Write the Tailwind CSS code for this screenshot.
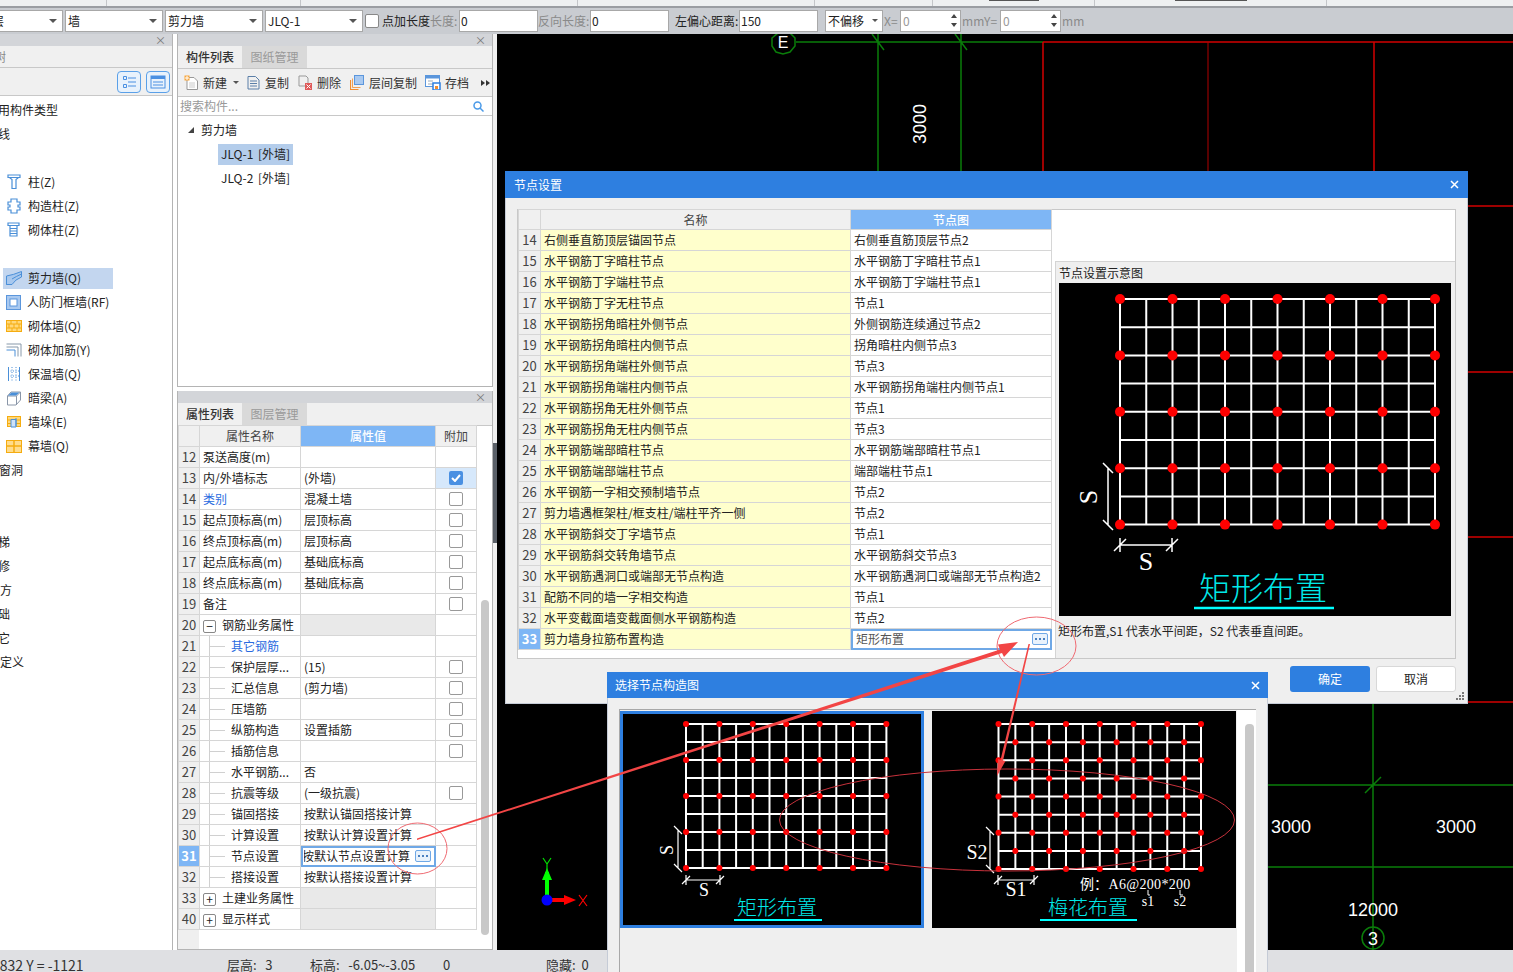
<!DOCTYPE html>
<html lang="zh-CN">
<head>
    <meta charset="UTF-8">
    <title>节点设置</title>
    <script src="https://cdn.jsdelivr.net/npm/@tailwindcss/browser@4"></script>
</head>
<body class="w-[1513px] h-[972px] overflow-hidden relative bg-white text-[12px] leading-[16px] text-[#222] font-['Noto_Sans_CJK_SC','Noto_Sans',sans-serif]">

    <!-- top strip, cut off by the screen grab -->
    <div class="h-[8px] bg-[#eef0f1] border-b-2 border-[#9a9da2] flex overflow-hidden">
        <div class="w-[107px] border-r border-[#c4c6c9]"></div>
        <div class="w-[194px] border-r border-[#c4c6c9]"></div>
        <div class="w-[277px] border-r border-[#c4c6c9]"></div>
        <div class="w-[237px] border-r border-[#c4c6c9]"></div>
        <div class="w-[118px] border-r border-[#c4c6c9]"></div>
        <div class="w-[162px] border-r border-[#c4c6c9] flex justify-center"><span class="w-[50px] h-[1px] bg-[#555]"></span></div>
        <div class="w-[232px] border-r border-[#c4c6c9] flex justify-center"><span class="w-[72px] h-[1px] bg-[#555]"></span></div>
    </div>

    <!-- drawing toolbar -->
    <div class="h-[26px] pb-[1px] bg-[#c9ccd1] flex items-center text-[#222] [&_input]:h-[22px] [&_input]:border [&_input]:border-[#a8a8a8] [&_input]:bg-white [&_input]:px-[1px] [&_input]:outline-none">
        <div class="w-[63px] h-[22px] bg-white border border-[#a8a8a8] border-l-0 flex items-center justify-between pr-[5px] overflow-hidden"><span class="-ml-[20px] whitespace-nowrap">楼层</span><span class="w-0 h-0 border-x-[4px] border-x-transparent border-t-[4px] border-t-[#555]"></span></div>
        <div class="ml-[2px] w-[98px] h-[22px] bg-white border border-[#a8a8a8] flex items-center justify-between pl-[2px] pr-[5px]"><span>墙</span><span class="w-0 h-0 border-x-[4px] border-x-transparent border-t-[4px] border-t-[#555]"></span></div>
        <div class="ml-[2px] w-[98px] h-[22px] bg-white border border-[#a8a8a8] flex items-center justify-between pl-[2px] pr-[5px]"><span>剪力墙</span><span class="w-0 h-0 border-x-[4px] border-x-transparent border-t-[4px] border-t-[#555]"></span></div>
        <div class="ml-[2px] w-[98px] h-[22px] bg-white border border-[#a8a8a8] flex items-center justify-between pl-[2px] pr-[5px]"><span>JLQ-1</span><span class="w-0 h-0 border-x-[4px] border-x-transparent border-t-[4px] border-t-[#555]"></span></div>
        <span class="ml-[2px] w-[14px] h-[14px] bg-white border border-[#888] rounded-[2px]"></span>
        <span class="ml-[3px]">点加长度</span>
        <span class="text-[#8a8a8a] w-[29px]">长度:</span>
        <input class="w-[79px]" value="0">
        <span class="text-[#8a8a8a] w-[52px]">反向长度:</span>
        <input class="w-[79px]" value="0">
        <span class="ml-[6px] w-[64px]">左偏心距离:</span>
        <input class="w-[79px]" value="150">
        <div class="ml-[7px] w-[58px] h-[22px] bg-white border border-[#a8a8a8] flex items-center justify-between px-[2px] pr-[4px]"><span>不偏移</span><span class="w-0 h-0 border-x-[3px] border-x-transparent border-t-[3px] border-t-[#555]"></span></div>
        <span class="ml-[1px] w-[16px] text-[#8a8a8a]">X=</span>
        <div class="w-[61px] h-[22px] bg-white border border-[#a8a8a8] flex items-center justify-between pl-[2px] pr-[3px] text-[#999]"><span>0</span><span class="flex flex-col gap-[5px]"><span class="w-0 h-0 border-x-[3px] border-x-transparent border-b-[4px] border-b-[#444]"></span><span class="w-0 h-0 border-x-[3px] border-x-transparent border-t-[4px] border-t-[#444]"></span></span></div>
        <span class="ml-[1px] w-[38px] text-[#8a8a8a]">mmY=</span>
        <div class="w-[61px] h-[22px] bg-white border border-[#a8a8a8] flex items-center justify-between pl-[2px] pr-[3px] text-[#999]"><span>0</span><span class="flex flex-col gap-[5px]"><span class="w-0 h-0 border-x-[3px] border-x-transparent border-b-[4px] border-b-[#444]"></span><span class="w-0 h-0 border-x-[3px] border-x-transparent border-t-[4px] border-t-[#444]"></span></span></div>
        <span class="ml-[1px] text-[#8a8a8a]">mm</span>
    </div>

    <div class="flex h-[916px]">
        <!-- left: component tree -->
        <div class="w-[173px] border-r border-[#b4b4b4] flex flex-col overflow-hidden">
            <div class="h-[12px] bg-[#d3d5d9] flex justify-end items-center pr-[6px] text-[#777] text-[11px] leading-none shrink-0">×</div>
            <div class="h-[22px] bg-[#f0f0f0] border-b border-[#c8c8c8] flex items-center text-[#888] shrink-0"><span class="-ml-[6px]">树</span></div>
            <div class="h-[28px] bg-[#f0f0f0] border-b border-[#c8c8c8] flex items-center justify-end gap-[5px] pr-[2px] shrink-0">
                <span class="w-[24px] h-[22px] rounded-[4px] border border-[#5aa0e8] bg-[#e8f2fc] flex items-center justify-center">
                    <svg width="14" height="14" viewBox="0 0 14 14" fill="none" stroke="#4a90e2"><path d="M1.5 1.5h3v3h-3zM1.5 9.5h3v3h-3zM6 3h8M6 7h8M6 11h8"/></svg>
                </span>
                <span class="w-[24px] h-[22px] rounded-[4px] border border-[#5aa0e8] bg-[#e8f2fc] flex items-center justify-center">
                    <svg width="16" height="14" viewBox="0 0 16 14" fill="none"><rect x="1" y="1" width="14" height="12" stroke="#4a90e2"/><rect x="1" y="1" width="14" height="3" fill="#4a90e2"/><path d="M3 7h10M3 10h10" stroke="#4a90e2"/></svg>
                </span>
            </div>
            <div class="pt-[2px] flex flex-col [&>div]:h-[24px] [&>div]:flex [&>div]:items-center [&>div]:whitespace-nowrap">
                <div><span class="-ml-[2px]">用构件类型</span></div>
                <div><span class="-ml-[2px]">线</span></div>
                <div></div>
                <div class="pl-[7px] gap-[7px]">
                    <svg width="14" height="16" viewBox="0 0 14 16" fill="none" stroke="#4a8fd8" stroke-width="1.2"><path d="M1 1h12v2.5H1zM2.5 3.5l2.5 2v9h4v-9l2.500-2"/></svg><span>柱(Z)</span>
                </div>
                <div class="pl-[7px] gap-[7px]">
                    <svg width="14" height="16" viewBox="0 0 14 16" fill="none" stroke="#4a8fd8" stroke-width="1.2"><path d="M4 1h6v3h3v3h-2v2h2v3h-3v3H4v-3H1V9h2V7H1V4h3z"/></svg><span>构造柱(Z)</span>
                </div>
                <div class="pl-[7px] gap-[7px]">
                    <svg width="14" height="16" viewBox="0 0 14 16" fill="none" stroke="#4a8fd8" stroke-width="1.2"><path d="M1 1h11v2.5H1zM3 3.5v10.500h7V3.500M3 6.500h7M3 9h7M3 11.500h7"/></svg><span>砌体柱(Z)</span>
                </div>
                <div></div>
                <div class="pl-[3px]">
                    <div class="w-[110px] h-[21px] bg-[#c3d6ef] flex items-center pl-[3px] gap-[3px]">
                        <svg width="16" height="14" viewBox="0 0 16 14"><path d="M0.500 5Q7 4 15.500 0.500V6Q9 8.500 6 13.500H0.500z" fill="#a8c8ee" stroke="#4a8fd8"/><path d="M0.500 5V13.500M6 8Q10 5.500 15.500 3" fill="none" stroke="#4a8fd8"/></svg><span class="ml-[3px]">剪力墙(Q)</span>
                    </div>
                </div>
                <div class="pl-[6px] gap-[6px]">
                    <svg width="15" height="15" viewBox="0 0 15 15"><rect x="0.500" y="0.500" width="14" height="14" fill="#a9c9f0" stroke="#5b96dc"/><rect x="4" y="4" width="7" height="7" fill="#fff" stroke="#5b96dc"/></svg><span>人防门框墙(RF)</span>
                </div>
                <div class="pl-[6px] gap-[6px]">
                    <svg width="16" height="12" viewBox="0 0 16 12"><rect x="0.500" y="0.500" width="15" height="11" fill="#ffd87a" stroke="#f5ac10"/><path d="M0 4h16M0 8h16M5 0v4M11 0v4M3 4v4M8 4v4M13 4v4M6 8v4M11 8v4" stroke="#f5ac10"/></svg><span>砌体墙(Q)</span>
                </div>
                <div class="pl-[6px] gap-[6px]">
                    <svg width="16" height="14" viewBox="0 0 16 14" fill="none"><path d="M0.500 1H15V13.500M0.500 4H12V13.500" stroke="#8899aa"/><path d="M0.500 7H9V13.500" stroke="#4a8fd8"/></svg><span>砌体加筋(Y)</span>
                </div>
                <div class="pl-[8px] gap-[8px]">
                    <svg width="12" height="14" viewBox="0 0 12 14" fill="none"><path d="M0.500 0V14M11.500 0V14" stroke="#4a8fd8"/><path d="M4 0V14M8 0V14M0 4h12M0 9h12" stroke="#4a8fd8" stroke-dasharray="1 1.500"/></svg><span>保温墙(Q)</span>
                </div>
                <div class="pl-[7px] gap-[7px]">
                    <svg width="14" height="15" viewBox="0 0 14 15"><path d="M0.500 5L4 1H13.500V9L9 14H0.500z" fill="#fff" stroke="#8a96a8"/><path d="M0.500 5H9.500L13.500 1M9.500 5V14" fill="none" stroke="#8a96a8"/><path d="M1 4.500L4.500 1.500H12.500L9 4.500z" fill="#4a8fd8"/></svg><span>暗梁(A)</span>
                </div>
                <div class="pl-[7px] gap-[7px]">
                    <svg width="14" height="12" viewBox="0 0 14 12"><rect x="0.500" y="0.500" width="13" height="10" fill="#ffd87a" stroke="#f5ac10"/><path d="M0 4h14M0 7.500h14" stroke="#f5ac10"/><path d="M4 3.500h5v7.500H4z" fill="#cfe2f8" stroke="#4a8fd8"/><path d="M9 2v8" stroke="#4a8fd8"/></svg><span>墙垛(E)</span>
                </div>
                <div class="pl-[6px] gap-[6px]">
                    <svg width="16" height="13" viewBox="0 0 16 13"><rect x="0.500" y="0.500" width="15" height="12" fill="#ffdc8c" stroke="#f5ac10"/><path d="M0 6h16M8 0v13" stroke="#f5ac10" stroke-width="1.500"/></svg><span>幕墙(Q)</span>
                </div>
                <div><span class="-ml-[1px]">窗洞</span></div>
                <div></div>
                <div></div>
                <div><span class="-ml-[2px]">梯</span></div>
                <div><span class="-ml-[2px]">修</span></div>
                <div><span>方</span></div>
                <div><span class="-ml-[2px]">础</span></div>
                <div><span class="-ml-[2px]">它</span></div>
                <div><span>定义</span></div>
            </div>
        </div>

        <div class="w-[4px]"></div>

        <!-- middle: component list and properties -->
        <div class="w-[316px] flex flex-col">
            <div class="h-[353px] border-x border-b border-[#b4b4b4] flex flex-col">
                <div class="h-[12px] bg-[#d3d5d9] flex justify-end items-center pr-[6px] text-[#777] text-[11px] leading-none">×</div>
                <div class="h-[23px] bg-[#f0f0f0] border-b border-[#c8c8c8] flex items-stretch">
                    <div class="w-[64px] flex items-center justify-center font-medium text-[#333]">构件列表</div>
                    <div class="w-[65px] bg-[#d9d9d9] flex items-center justify-center text-[#999]">图纸管理</div>
                </div>
                <div class="h-[28px] bg-[#f0f0f0] border-b border-[#c8c8c8] flex items-center pl-[6px] text-[#333] whitespace-nowrap">
                    <svg width="15" height="16" viewBox="0 0 15 16" fill="none"><path d="M3 2.500h7l3.500 3.500v8.500H3z" fill="#fff" stroke="#999"/><path d="M5 8h6M5 10h6M5 12h6" stroke="#ccc"/><rect x="0.500" y="0.500" width="5" height="5" fill="#f7a63c"/><path d="M1 3h4M3 1v4" stroke="#fff"/></svg>
                    <span class="ml-[4px]">新建</span><span class="ml-[6px] w-0 h-0 border-x-[3px] border-x-transparent border-t-[3px] border-t-[#555]"></span>
                    <svg class="ml-[8px]" width="13" height="15" viewBox="0 0 13 15" fill="none" stroke="#5b7fa8"><path d="M1 1.500h7.500L12 5v9H1zM3 6h7M3 8.500h7M3 11h7"/></svg>
                    <span class="ml-[5px]">复制</span>
                    <svg class="ml-[9px]" width="14" height="15" viewBox="0 0 14 15" fill="none"><path d="M1 1h7l2 2v8H1z" stroke="#999"/><rect x="7" y="8" width="7" height="7" fill="#e05a5a"/><path d="M8.500 9.500l4 4m0-4l-4 4" stroke="#fff"/></svg>
                    <span class="ml-[5px]">删除</span>
                    <svg class="ml-[9px]" width="14" height="15" viewBox="0 0 14 15" fill="none"><path d="M0.500 5v9.500h8" stroke="#f08c30" stroke-width="1.200"/><path d="M2.500 3.500v9h8" stroke="#f08c30" stroke-width="0.800"/><rect x="4.500" y="0.500" width="9" height="9" fill="#a9c9f0" stroke="#5b96dc"/></svg>
                    <span class="ml-[5px]">层间复制</span>
                    <svg class="ml-[8px]" width="16" height="15" viewBox="0 0 16 15" fill="none"><rect x="0.500" y="0.500" width="14" height="11" fill="#fff" stroke="#5b96dc"/><rect x="0.500" y="0.500" width="14" height="3" fill="#5b96dc"/><path d="M3 6h5M3 9h5" stroke="#9ab"/><rect x="8" y="8" width="7" height="7" fill="#fff" stroke="#2e7fe0" stroke-width="1.500"/><rect x="10" y="11" width="3" height="3" fill="#f08c30"/></svg>
                    <span class="ml-[4px]">存档</span>
                    <span class="ml-[12px] flex"><span class="w-0 h-0 border-y-[3px] border-y-transparent border-l-[4px] border-l-[#333]"></span><span class="ml-[1px] w-0 h-0 border-y-[3px] border-y-transparent border-l-[4px] border-l-[#333]"></span></span>
                </div>
                <div class="h-[19px] border-b border-[#c8c8c8] flex items-center justify-between pl-[2px] pr-[8px] text-[#999]">
                    <span>搜索构件...</span>
                    <svg width="11" height="11" viewBox="0 0 11 11" fill="none" stroke="#4a9ae8" stroke-width="1.500"><circle cx="4.500" cy="4.500" r="3.500"/><path d="M7 7l3.500 3.500"/></svg>
                </div>
                <div class="pt-[2px] flex flex-col whitespace-nowrap [word-spacing:2px]">
                    <div class="h-[24px] flex items-center pl-[10px]"><span class="w-0 h-0 border-b-[6px] border-b-[#444] border-l-[6px] border-l-transparent"></span><span class="ml-[7px]">剪力墙</span></div>
                    <div class="h-[24px] flex items-center pl-[40px]"><span class="h-[21px] px-[3px] bg-[#b4cdeb] flex items-center">JLQ-1 [外墙]</span></div>
                    <div class="h-[24px] flex items-center pl-[43px]">JLQ-2 [外墙]</div>
                </div>
            </div>
            <div class="h-[4px]"></div>
            <div class="h-[559px] border-x border-[#b4b4b4] border-b flex flex-col relative">
                <div class="h-[12px] bg-[#d3d5d9] flex justify-end items-center pr-[6px] text-[#777] text-[11px] leading-none">×</div>
                <div class="h-[23px] bg-[#f0f0f0] border-b border-[#c8c8c8] flex items-stretch">
                    <div class="w-[64px] flex items-center justify-center font-medium text-[#333]">属性列表</div>
                    <div class="w-[65px] bg-[#d9d9d9] flex items-center justify-center text-[#999]">图层管理</div>
                </div>
                <!-- scrollbar -->
                <div class="absolute left-[303px] top-[209px] w-[8px] h-[335px] rounded-[4px] bg-[#c8c8c8]"></div>
                <div class="flex flex-1 bg-[linear-gradient(90deg,#efefef_21px,#fff_21px)]">
                    <table class="w-[298px] -mt-px table-fixed border-collapse self-start [&_td]:h-[21px] [&_td]:p-0 [&_td]:border [&_td]:border-[#d6d6d6] [&_td]:whitespace-nowrap [&_td]:overflow-hidden [&_td:first-child]:bg-[#efefef] [&_td:first-child]:text-center [&_td:first-child]:text-[13px] [&_td:first-child]:text-[#444] [&_td:nth-child(2)]:bg-white [&_td:nth-child(3)]:bg-white [&_td:nth-child(4)]:bg-white [&_td:nth-child(2)]:pl-[3px] [&_td:nth-child(3)]:pl-[3px] [&_td:has(i)]:leading-[20px] [&_input]:appearance-none [&_input]:block [&_input]:mx-auto [&_input]:w-[14px] [&_input]:h-[14px] [&_input]:bg-white [&_input]:border [&_input]:border-[#999] [&_input]:rounded-[2px] [&_i]:float-left [&_i]:w-[16px] [&_i]:h-[20px] [&_i]:mr-[6px] [&_i]:ml-[6px] [&_i]:border-l [&_i]:border-[#d0d0d0] [&_i]:bg-[linear-gradient(#d0d0d0,#d0d0d0)] [&_i]:bg-no-repeat [&_i]:bg-[length:100%_1px] [&_i]:bg-[position:0_10px]">
                        <colgroup><col class="w-[21px]"><col class="w-[101px]"><col class="w-[135px]"><col class="w-[41px]"></colgroup>
                        <tr class="[&_td]:!bg-[#f0f0f0] [&_td]:text-center [&_td]:text-[#444] [&_td]:!pl-0 [&_td:nth-child(3)]:!bg-[#7eb6f5]"><td></td><td>属性名称</td><td class="!text-white font-medium">属性值</td><td>附加</td></tr>
                        <tr><td>12</td><td>泵送高度(m)</td><td></td><td></td></tr>
                        <tr><td>13</td><td>内/外墙标志</td><td>(外墙)</td><td class="!bg-[#d6e8fb]"><span class="mx-auto w-[14px] h-[14px] rounded-[2px] bg-[#4a90e2] flex items-center justify-center"><svg width="10" height="8" viewBox="0 0 10 8" fill="none" stroke="#fff" stroke-width="2"><path d="M1 4l3 3 5-6"/></svg></span></td></tr>
                        <tr><td>14</td><td class="text-[#2a6be0]">类别</td><td>混凝土墙</td><td><input type="checkbox"></td></tr>
                        <tr><td>15</td><td>起点顶标高(m)</td><td>层顶标高</td><td><input type="checkbox"></td></tr>
                        <tr><td>16</td><td>终点顶标高(m)</td><td>层顶标高</td><td><input type="checkbox"></td></tr>
                        <tr><td>17</td><td>起点底标高(m)</td><td>基础底标高</td><td><input type="checkbox"></td></tr>
                        <tr><td>18</td><td>终点底标高(m)</td><td>基础底标高</td><td><input type="checkbox"></td></tr>
                        <tr><td>19</td><td>备注</td><td></td><td><input type="checkbox"></td></tr>
                        <tr><td>20</td><td><span class="inline-flex w-[13px] h-[13px] border border-[#888] rounded-[2px] items-center justify-center align-middle mr-[6px] -mt-[1px] leading-none">−</span>钢筋业务属性</td><td class="!bg-[#e9e9e9]"></td><td></td></tr>
                        <tr><td>21</td><td class="text-[#2a6be0]"><i></i>其它钢筋</td><td></td><td></td></tr>
                        <tr><td>22</td><td><i></i>保护层厚...</td><td>(15)</td><td><input type="checkbox"></td></tr>
                        <tr><td>23</td><td><i></i>汇总信息</td><td>(剪力墙)</td><td><input type="checkbox"></td></tr>
                        <tr><td>24</td><td><i></i>压墙筋</td><td></td><td><input type="checkbox"></td></tr>
                        <tr><td>25</td><td><i></i>纵筋构造</td><td>设置插筋</td><td><input type="checkbox"></td></tr>
                        <tr><td>26</td><td><i></i>插筋信息</td><td></td><td><input type="checkbox"></td></tr>
                        <tr><td>27</td><td><i></i>水平钢筋...</td><td>否</td><td></td></tr>
                        <tr><td>28</td><td><i></i>抗震等级</td><td>(一级抗震)</td><td><input type="checkbox"></td></tr>
                        <tr><td>29</td><td><i></i>锚固搭接</td><td>按默认锚固搭接计算</td><td></td></tr>
                        <tr><td>30</td><td><i></i>计算设置</td><td>按默认计算设置计算</td><td></td></tr>
                        <tr><td class="!bg-[#7eb6f5] !text-white font-bold">31</td><td><i></i>节点设置</td><td class="outline-2 -outline-offset-2 outline-[#6fa8e6]"><div class="flex items-center justify-between pr-[4px]"><span class="w-[106px] overflow-hidden flex justify-end">按默认节点设置计算</span><span class="w-[16px] h-[12px] rounded-[2px] border border-[#6fa8e6] bg-[#e8f2fc] flex items-center justify-center gap-[2px]"><b class="w-[2px] h-[2px] bg-[#4a80c0]"></b><b class="w-[2px] h-[2px] bg-[#4a80c0]"></b><b class="w-[2px] h-[2px] bg-[#4a80c0]"></b></span></div></td><td></td></tr>
                        <tr><td>32</td><td><i></i>搭接设置</td><td>按默认搭接设置计算</td><td></td></tr>
                        <tr><td>33</td><td><span class="inline-flex w-[13px] h-[13px] border border-[#888] rounded-[2px] items-center justify-center align-middle mr-[6px] -mt-[1px] leading-none">+</span>土建业务属性</td><td class="!bg-[#e9e9e9]"></td><td></td></tr>
                        <tr><td>40</td><td><span class="inline-flex w-[13px] h-[13px] border border-[#888] rounded-[2px] items-center justify-center align-middle mr-[6px] -mt-[1px] leading-none">+</span>显示样式</td><td class="!bg-[#e9e9e9]"></td><td></td></tr>
                    </table>
                </div>
            </div>
        </div>

        <!-- splitter -->
        <div class="w-[4px] bg-[#f0f0f0]"><div class="mt-[409px] h-[100px] bg-[#5a6068]"></div></div>

        <!-- drawing area -->
        <div class="flex-1 bg-black relative overflow-hidden">
            <svg class="absolute left-0 top-0" width="1016" height="916" viewBox="497 34 1016 916" fill="none">
                <g stroke="#0a7d0a" stroke-width="1.500">
                    <path d="M796 42H1043M878 34V171M961 34V171M872 34L884 50M955 34L967 50"/>
                    <path d="M1373 703V950M1268 785H1513M1268 867H1513M1365 793L1381 777"/>
                    <path d="M778 33L790 33L795 38V46L790 52L783 54L776 52L772 46V38Z" />
                    <circle cx="1373" cy="938" r="11"/>
                </g>
                <g stroke="#d20000" stroke-width="1.500">
                    <path d="M1043 42H1513M1043 42V171M1374 42V171M1468 206H1513M1468 372H1513M1468 537H1513M1468 702H1513"/>
                    <path d="M1208 42V171" stroke-width="1" stroke="#b00000"/>
                </g>
                <g fill="#fff" font-family="'Liberation Sans',sans-serif">
                    <text x="783" y="48" font-size="16" text-anchor="middle">E</text>
                    <text x="926" y="144" font-size="18" transform="rotate(-90 926 144)">3000</text>
                    <text x="1291" y="833" font-size="18" text-anchor="middle">3000</text>
                    <text x="1456" y="833" font-size="18" text-anchor="middle">3000</text>
                    <text x="1373" y="916" font-size="18" text-anchor="middle">12000</text>
                    <text x="1373" y="945" font-size="18" text-anchor="middle">3</text>
                </g>
                <!-- axis marker -->
                <path d="M547 900V872" stroke="#00ff00" stroke-width="4"/>
                <path d="M547 868l-5 12h10z" fill="#00ff00"/>
                <path d="M547 900h24" stroke="#ff0000" stroke-width="4"/>
                <path d="M576 900l-12-5v10z" fill="#ff0000"/>
                <circle cx="547" cy="900" r="5.500" fill="#0000ff"/>
                <path d="M543 858l4 6 4-6M547 864v6" stroke="#00e000" stroke-width="1.200"/>
                <path d="M579 895l8 11m0-11l-8 11" stroke="#ff0000" stroke-width="1.200"/>
            </svg>
        </div>
    </div>

    <!-- status bar -->
    <div class="h-[22px] bg-[#dfe0e3] relative overflow-hidden text-[#333] text-[13px] whitespace-nowrap flex items-center pt-[8px]">
        <span class="-ml-[8px] w-[235px] text-[14px]">1832 Y = -1121</span>
        <span class="w-[83px]">层高:&nbsp;&nbsp; 3</span>
        <span class="w-[133px]">标高:&nbsp;&nbsp; -6.05~-3.05</span>
        <span class="w-[103px]">0</span>
        <span>隐藏:&nbsp; 0</span>
    </div>

    <!-- dialog: node settings -->
    <div class="absolute left-[505px] top-[171px] w-[963px] h-[533px] bg-[#efefef] border-b border-x border-[#c5cbd6] flex flex-col">
        <div class="h-[27px] shrink-0 bg-[#2e7fe0] text-white flex items-center justify-between px-[9px] -mx-px">
            <span>节点设置</span>
            <svg width="9" height="9" viewBox="0 0 9 9" stroke="#fff" stroke-width="1.500"><path d="M1 1l7 7m0-7l-7 7"/></svg>
        </div>
        <div class="ml-[11px] mt-[11px] w-[939px] h-[450px] bg-white border border-[#c8c8c8] flex">
            <table class="w-[533px] -mt-px self-start table-fixed border-collapse [&_td]:h-[21px] [&_td]:p-0 [&_td]:border [&_td]:border-[#d6d6d6] [&_td]:whitespace-nowrap [&_td]:overflow-hidden [&_td:first-child]:bg-[#efefef] [&_td:first-child]:text-center [&_td:first-child]:text-[13px] [&_td:first-child]:text-[#444] [&_td:nth-child(2)]:bg-[#ffffcc] [&_td:nth-child(2)]:pl-[3px] [&_td:nth-child(3)]:pl-[3px]">
                <colgroup><col class="w-[22px]"><col class="w-[310px]"><col class="w-[201px]"></colgroup>
                <tr class="[&_td]:!h-[20px] [&_td]:!bg-[#f0f0f0] [&_td]:text-center [&_td]:text-[#444] [&_td]:!pl-0 [&_td:nth-child(3)]:!bg-[#7eb6f5]"><td></td><td>名称</td><td class="!text-white font-medium">节点图</td></tr>
                <tr><td>14</td><td>右侧垂直筋顶层锚固节点</td><td>右侧垂直筋顶层节点2</td></tr>
                <tr><td>15</td><td>水平钢筋丁字暗柱节点</td><td>水平钢筋丁字暗柱节点1</td></tr>
                <tr><td>16</td><td>水平钢筋丁字端柱节点</td><td>水平钢筋丁字端柱节点1</td></tr>
                <tr><td>17</td><td>水平钢筋丁字无柱节点</td><td>节点1</td></tr>
                <tr><td>18</td><td>水平钢筋拐角暗柱外侧节点</td><td>外侧钢筋连续通过节点2</td></tr>
                <tr><td>19</td><td>水平钢筋拐角暗柱内侧节点</td><td>拐角暗柱内侧节点3</td></tr>
                <tr><td>20</td><td>水平钢筋拐角端柱外侧节点</td><td>节点3</td></tr>
                <tr><td>21</td><td>水平钢筋拐角端柱内侧节点</td><td>水平钢筋拐角端柱内侧节点1</td></tr>
                <tr><td>22</td><td>水平钢筋拐角无柱外侧节点</td><td>节点1</td></tr>
                <tr><td>23</td><td>水平钢筋拐角无柱内侧节点</td><td>节点3</td></tr>
                <tr><td>24</td><td>水平钢筋端部暗柱节点</td><td>水平钢筋端部暗柱节点1</td></tr>
                <tr><td>25</td><td>水平钢筋端部端柱节点</td><td>端部端柱节点1</td></tr>
                <tr><td>26</td><td>水平钢筋一字相交预制墙节点</td><td>节点2</td></tr>
                <tr><td>27</td><td>剪力墙遇框架柱/框支柱/端柱平齐一侧</td><td>节点2</td></tr>
                <tr><td>28</td><td>水平钢筋斜交丁字墙节点</td><td>节点1</td></tr>
                <tr><td>29</td><td>水平钢筋斜交转角墙节点</td><td>水平钢筋斜交节点3</td></tr>
                <tr><td>30</td><td>水平钢筋遇洞口或端部无节点构造</td><td>水平钢筋遇洞口或端部无节点构造2</td></tr>
                <tr><td>31</td><td>配筋不同的墙一字相交构造</td><td>节点1</td></tr>
                <tr><td>32</td><td>水平变截面墙变截面侧水平钢筋构造</td><td>节点2</td></tr>
                <tr><td class="!bg-[#7eb6f5] !text-white font-bold">33</td><td>剪力墙身拉筋布置构造</td><td class="outline-2 -outline-offset-2 outline-[#6fa8e6] text-[#555]"><div class="flex items-center justify-between pl-[2px] pr-[3px]"><span>矩形布置</span><span class="w-[16px] h-[12px] rounded-[2px] border border-[#6fa8e6] bg-[#e8f2fc] flex items-center justify-center gap-[2px]"><b class="w-[2px] h-[2px] bg-[#4a80c0]"></b><b class="w-[2px] h-[2px] bg-[#4a80c0]"></b><b class="w-[2px] h-[2px] bg-[#4a80c0]"></b></span></div></td></tr>
            </table>
            <div class="flex-1 flex flex-col pl-[3px] pt-[51px]">
                <div class="flex-1 bg-[#efefef] border border-[#d4d4d4] border-r-0 border-b-0 flex flex-col">
                    <div class="h-[21px] pl-[3px] flex items-center">节点设置示意图</div>
                    <svg class="ml-[3px]" data-grid="1120,299,26.25,28.2,5,2,0" width="392" height="333" viewBox="1059 283 392 333" fill="none">
                        <rect x="1059" y="283" width="392" height="333" fill="#000"/>
                        <path d="M1108 468V525M1103 463l10 10M1103 520l10 10M1120 545H1172M1120 538v14M1172 538v14M1114 551l12-12M1166 551l12-12" stroke="#fff" stroke-width="1.500"/>
                        <text x="1146" y="570" font-size="26" fill="#fff" text-anchor="middle" font-family="'Liberation Serif',serif">S</text>
                        <text x="1097" y="497" font-size="26" fill="#fff" text-anchor="middle" transform="rotate(-90 1097 497)" font-family="'Liberation Serif',serif">S</text>
                        <text x="1263" y="600" font-size="32" fill="#00e8e8" text-anchor="middle" font-weight="300">矩形布置</text>
                        <path d="M1194 608H1334" stroke="#00ffff" stroke-width="2.500"/>
                    </svg>
                    <div class="flex-1 pl-[2px] pt-[7px]">矩形布置,S1 代表水平间距，S2 代表垂直间距。</div>
                </div>
            </div>
        </div>
        <div class="mt-[7px] flex justify-end gap-[6px] pr-[11px]">
            <div class="w-[80px] h-[26px] rounded-[3px] bg-[#2e7fe0] text-white flex items-center justify-center">确定</div>
            <div class="w-[80px] h-[26px] rounded-[3px] bg-white border border-[#d8d8d8] flex items-center justify-center">取消</div>
        </div>
        <svg class="absolute right-[3px] bottom-[3px]" width="8" height="8" viewBox="0 0 8 8" fill="#777"><path d="M6 0h2v2H6zM3 3h2v2H3zM6 3h2v2H6zM0 6h2v2H0zM3 6h2v2H3zM6 6h2v2H6z"/></svg>
    </div>

    <!-- dialog: pick node drawing -->
    <div class="absolute left-[607px] top-[672px] w-[661px] h-[300px] bg-[#efefef] border-x border-[#c5cbd6] flex flex-col">
        <div class="h-[26px] shrink-0 bg-[#2e7fe0] text-white flex items-center justify-between px-[8px] -mx-px">
            <span>选择节点构造图</span>
            <svg width="9" height="9" viewBox="0 0 9 9" stroke="#fff" stroke-width="1.500"><path d="M1 1l7 7m0-7l-7 7"/></svg>
        </div>
        <div class="ml-[11px] mt-[11px] w-[637px] flex-1 border-t border-l border-[#a8a8a8] flex gap-[8px] pt-[1px] relative">
            <div class="w-[304px] h-[217px] border-[3px] border-[#2e7fe0] bg-black overflow-hidden shrink-0">
                <svg data-grid="686,724,16.7,18,3,2,0" width="298" height="211" viewBox="623 714 298 211" fill="none">
                    <path d="M678 830V868M674 826l8 8M674 864l8 8M686 880H720M686 875v10M720 875v10M682 884l8-8M716 884l8-8" stroke="#fff" stroke-width="1.200"/>
                    <text x="704" y="896" font-size="18" fill="#fff" text-anchor="middle" font-family="'Liberation Serif',serif">S</text>
                    <text x="673" y="850" font-size="18" fill="#fff" text-anchor="middle" transform="rotate(-90 673 850)" font-family="'Liberation Serif',serif">S</text>
                    <text x="777" y="915" font-size="20" fill="#00e8e8" text-anchor="middle" font-weight="300">矩形布置</text>
                    <path d="M734 920H822" stroke="#00ffff" stroke-width="2"/>
                </svg>
            </div>
            <div class="w-[304px] h-[217px] bg-black overflow-hidden shrink-0">
                <svg data-grid="998.500,724,16.875,18.125,3,2,1" width="304" height="217" viewBox="932 711 304 217" fill="none">
                    <path d="M990 831V869M986 827l8 8M986 865l8 8M998 880H1034M998 875v10M1034 875v10M994 884l8-8M1030 884l8-8" stroke="#fff" stroke-width="1.200"/>
                    <text x="977" y="859" font-size="20" fill="#fff" text-anchor="middle" font-family="'Liberation Serif',serif">S2</text>
                    <text x="1016" y="896" font-size="20" fill="#fff" text-anchor="middle" font-family="'Liberation Serif',serif">S1</text>
                    <text x="1080" y="889" font-size="14" letter-spacing="0.300" fill="#fff" font-family="'Liberation Serif',serif">例：A6@200*200</text>
                    <path d="M1148 890v5h2M1180 890v5h3" stroke="#fff"/>
                    <text x="1148" y="906" font-size="14" fill="#fff" text-anchor="middle" font-family="'Liberation Serif',serif">s1</text>
                    <text x="1180" y="906" font-size="14" fill="#fff" text-anchor="middle" font-family="'Liberation Serif',serif">s2</text>
                    <text x="1088" y="915" font-size="20" fill="#00e8e8" text-anchor="middle" font-weight="300">梅花布置</text>
                    <path d="M1040 920H1137" stroke="#00ffff" stroke-width="2"/>
                </svg>
            </div>
            <div class="absolute left-[617px] top-0 w-[19px] h-full bg-white">
                <div class="ml-[8px] mt-[14px] w-[9px] h-full rounded-[4px] bg-[#c8c8c8]"></div>
            </div>
        </div>
    </div>

    <!-- red markup drawn on top of the screenshot -->
    <svg class="absolute left-0 top-0 pointer-events-none" width="1513" height="972" viewBox="0 0 1513 972" fill="none">
        <ellipse cx="417.500" cy="848.500" rx="29.500" ry="25.500" stroke="#ef6a72"/>
        <ellipse cx="1036.500" cy="646" rx="39.500" ry="29" stroke="#ef6a72"/>
        <ellipse cx="1007" cy="820" rx="227.500" ry="51" stroke="#c8323c"/>
        <path d="M417 838.500L1000 649.500L998 644.500L1018 642L1004 657L1002 653L417 840Z" fill="#f24545"/>
        <path d="M1028.500 644L1000.500 760L998 759L997 776L1005.500 761L1003 760.500L1030 644Z" fill="#f24545"/>
    </svg>

    <script>
        // red-dotted rebar grids: data-grid = x,y,stepX,stepY,dotRadius,lineWidth,staggered
        document.querySelectorAll("[data-grid]").forEach(svg => {
            const [x, y, dx, dy, r, w, stag] = svg.dataset.grid.split(",").map(Number);
            const ns = "http://www.w3.org/2000/svg";
            const marks = svg.firstElementChild;
            let d = "";
            for (let i = 0; i <= 12; i++) d += `M${x + i * dx} ${y}V${y + 8 * dy}`;
            for (let j = 0; j <= 8; j++) d += `M${x} ${y + j * dy}H${x + 12 * dx}`;
            const lines = document.createElementNS(ns, "path");
            lines.setAttribute("d", d);
            lines.setAttribute("stroke", "#fff");
            lines.setAttribute("stroke-width", w);
            svg.insertBefore(lines, marks && marks.tagName === "rect" ? marks.nextSibling : marks);
            for (let j = 0; j <= 8; j++) {
                const odd = stag && j % 2 === 1;
                if (!stag && j % 2 === 1) continue;
                for (let i = odd ? 1 : 0; i <= 12; i += 2) {
                    const dot = document.createElementNS(ns, "circle");
                    dot.setAttribute("cx", x + i * dx);
                    dot.setAttribute("cy", y + j * dy);
                    dot.setAttribute("r", r);
                    dot.setAttribute("fill", "#ff0000");
                    svg.appendChild(dot);
                }
            }
        });
    </script>
</body>
</html>
